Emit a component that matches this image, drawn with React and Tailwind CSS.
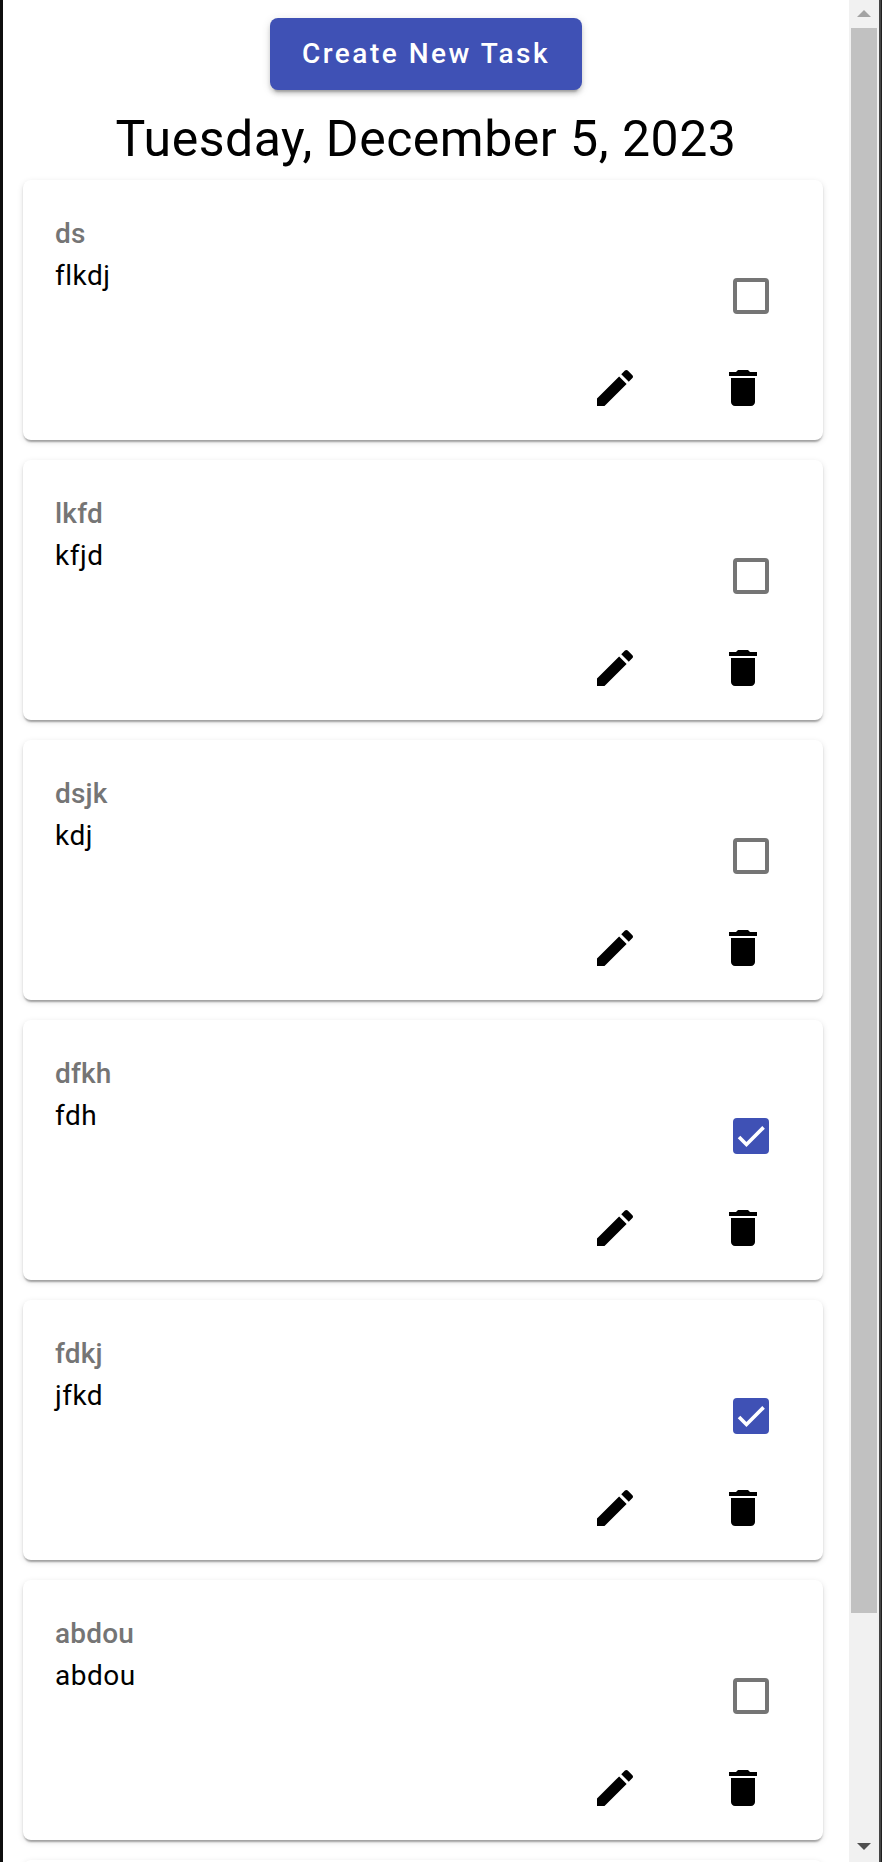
const tasks = [
  { title: "ds", body: "flkdj", done: false },
  { title: "lkfd", body: "kfjd", done: false },
  { title: "dsjk", body: "kdj", done: false },
  { title: "dfkh", body: "fdh", done: true },
  { title: "fdkj", body: "jfkd", done: true },
  { title: "abdou", body: "abdou", done: false },
  { title: "", body: "", done: false },
];

function Checkbox({ checked }) {
  if (!checked) {
    return <span className="block size-9 rounded-[4px] border-4 border-[#757575]" />;
  }
  return (
    <span className="block size-9 rounded-[4px] border-4 border-[#3f51b5] bg-[#3f51b5]">
      <svg viewBox="0 0 24 24" className="size-7" fill="none" stroke="white" strokeWidth="3.12">
        <path d="M1.73,12.91 8.1,19.28 22.79,4.59" />
      </svg>
    </span>
  );
}

function TaskCard({ task }) {
  return (
    <article className="flex h-65 w-200 shrink-0 flex-col rounded-lg bg-white shadow-[0_4px_2px_-2px_rgba(0,0,0,0.2),0_2px_2px_0_rgba(0,0,0,0.14),0_2px_6px_0_rgba(0,0,0,0.12)]">
      <div className="flex h-[98px] flex-col px-8 pt-8">
        <h2 className="h-[42px] text-[28px] leading-[44px] font-medium tracking-[0.2px] text-[#757575]">{task.title}</h2>
        <p className="text-[28px] leading-[44px] tracking-[0.5px] text-black">{task.body}</p>
      </div>
      <div className="flex h-[86px] justify-end pr-[54px]">
        <Checkbox checked={task.done} />
      </div>
      <div className="flex justify-end gap-20 pr-14">
        <svg viewBox="0 0 24 24" className="size-12" fill="black">
          <path d="M3 17.25V21h3.75L17.81 9.94l-3.75-3.75L3 17.25zM20.71 7.04c.39-.39.39-1.02 0-1.41l-2.34-2.34c-.39-.39-1.02-.39-1.41 0l-1.83 1.83 3.75 3.75 1.83-1.83z" />
        </svg>
        <svg viewBox="0 0 24 24" className="size-12" fill="black">
          <path d="M6 19c0 1.1.9 2 2 2h8c1.1 0 2-.9 2-2V7H6v12zM19 4h-3.5l-1-1h-5l-1 1H5v2h14V4z" />
        </svg>
      </div>
    </article>
  );
}

function Scrollbar() {
  return (
    <div className="flex w-[30px] shrink-0 flex-col items-center bg-[#f1f1f1]">
      <svg width="30" height="28" viewBox="0 0 30 28" fill="#a3a3a3">
        <path d="M8 17 15 10 22 17Z" />
      </svg>
      <div className="h-[1585px] w-[26px] bg-[#c1c1c1]" />
      <div className="flex-1" />
      <svg width="30" height="28" viewBox="0 0 30 28" fill="#505050">
        <path d="M8 9H22L15 16Z" />
      </svg>
    </div>
  );
}

export default function App() {
  return (
    <div className="flex h-[1862px] w-[882px] overflow-hidden bg-white font-['Roboto',sans-serif]">
      <div className="w-[3px] shrink-0 bg-[#0f0f0f]" />
      <main className="flex min-w-0 flex-1 flex-col overflow-hidden bg-white pt-[18px]">
        <button className="h-18 w-78 shrink-0 self-center rounded-lg bg-[#3f51b5] text-[28px] font-medium tracking-[2.5px] whitespace-nowrap text-white shadow-[0_6px_2px_-4px_rgba(0,0,0,0.2),0_4px_4px_0_rgba(0,0,0,0.14),0_2px_10px_0_rgba(0,0,0,0.12)]">
          Create New Task
        </button>
        <h1 className="h-[90px] shrink-0 text-center text-[50px] leading-[98px] tracking-[0.5px] text-black">
          Tuesday, December 5, 2023
        </h1>
        <section className="flex flex-col gap-5 pl-5">
          {tasks.map((task, i) => (
            <TaskCard key={i} task={task} />
          ))}
        </section>
      </main>
      <Scrollbar />
      <div className="w-[3px] shrink-0 border-l-2 border-[#454545] bg-[#202020]" />
    </div>
  );
}
